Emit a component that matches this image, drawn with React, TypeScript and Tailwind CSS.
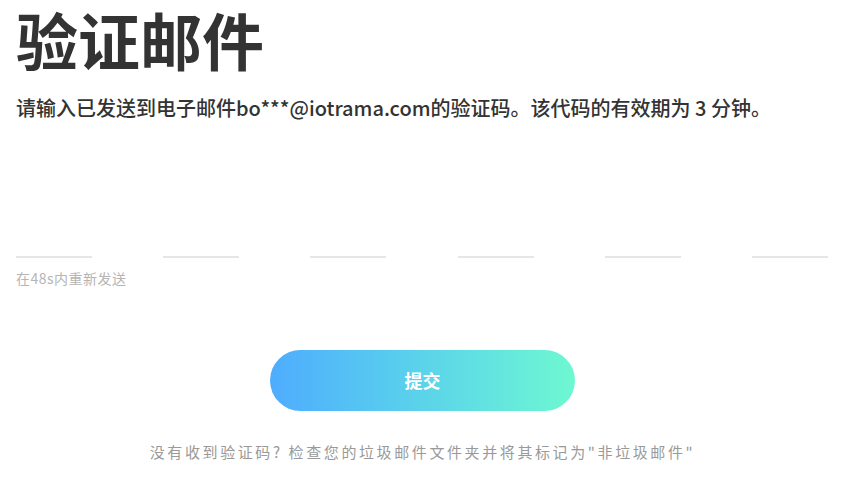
export default function App() {
  const cells = [0, 1, 2, 3, 4, 5];

  return (
    <div
      className="w-[858px] h-[493px] bg-white px-4 overflow-hidden"
      style={{ fontFamily: '"Noto Sans CJK SC", "Noto Sans", sans-serif' }}
    >
      <h1 className="pt-[8px] text-[62px] leading-[62px] font-bold text-[#333333]">
        验证邮件
      </h1>
      <p className="mt-[24px] text-[20px] leading-[28px] font-medium text-[#333333]">
        请输入已发送到电子邮件bo***@iotrama.com的验证码。该代码的有效期为 3 分钟。
      </p>

      <div className="mt-[134px] flex justify-between w-[812px]">
        {cells.map((i) => (
          <div key={i} className="w-[76px] h-[2px] bg-[#e6e6e6]" />
        ))}
      </div>
      <p className="mt-[10px] text-[14px] leading-[20px] tracking-[0.5px] text-[#b5b5b5]">
        在48s内重新发送
      </p>

      <div className="mt-[62px] flex justify-center">
        <button
          type="button"
          className="ml-[-13px] w-[305px] h-[61px] rounded-full bg-gradient-to-r from-[#4facfe] to-[#6ef8d0] text-white text-[18px] font-bold"
        >
          提交
        </button>
      </div>

      <p className="mt-[30px] ml-[-13px] text-center text-[15px] leading-[22px] tracking-[2.6px] text-[#999999]">
        没有收到验证码? 检查您的垃圾邮件文件夹并将其标记为"非垃圾邮件"
      </p>
    </div>
  );
}
